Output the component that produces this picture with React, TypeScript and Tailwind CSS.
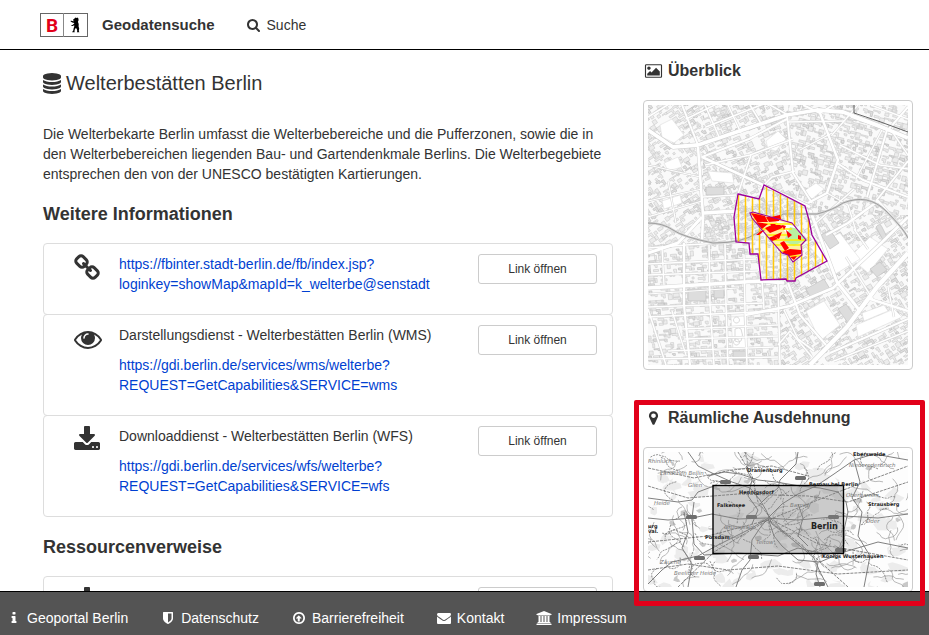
import React from "react";

type IconProps = { name: keyof typeof glyphs; className?: string };

const glyphs = {
  search: {
    box: "64 0 1792 1792",
    d: "M1216 832q0-185-131.500-316.500t-316.500-131.500-316.500 131.500-131.500 316.500 131.500 316.500 316.500 131.500 316.500-131.500 131.500-316.500zm512 832q0 52-38 90t-90 38q-54 0-90-38l-343-342q-179 124-399 124-143 0-273.500-55.500t-225-150-150-225-55.500-273.500 55.500-273.500 150-225 225-150 273.500-55.500 273.500 55.500 225 150 150 225 55.500 273.500q0 220-124 399l343 343q37 37 37 90z",
  },
  database: {
    box: "128 0 1536 1792",
    d: "M896 768q237 0 443-43t325-127v170q0 69-103 128t-280 93.500-385 34.500-385-34.500-280-93.500-103-128v-170q119 84 325 127t443 43zm0 768q237 0 443-43t325-127v170q0 69-103 128t-280 93.500-385 34.500-385-34.500-280-93.500-103-128v-170q119 84 325 127t443 43zm0-384q237 0 443-43t325-127v170q0 69-103 128t-280 93.500-385 34.500-385-34.500-280-93.500-103-128v-170q119 84 325 127t443 43zm0-1152q208 0 385 34.500t280 93.500 103 128v128q0 69-103 128t-280 93.500-385 34.500-385-34.500-280-93.500-103-128v-128q0-69 103-128t280-93.500 385-34.500z",
  },
  link: {
    box: "64 0 1792 1792",
    d: "M1520 1216q0-40-28-68l-208-208q-28-28-68-28-42 0-72 32 3 3 19 18.500t21.500 21.500 15 19 13 25.500 3.500 27.500q0 40-28 68t-68 28q-15 0-27.500-3.500t-25.500-13-19-15-21.500-21.500-18.500-19q-33 31-33 73 0 40 28 68l206 207q27 27 68 27 40 0 68-26l147-146q28-28 28-67zm-703-705q0-40-28-68l-206-207q-28-28-68-28-39 0-68 27l-147 146q-28 28-28 67 0 40 28 68l208 208q27 27 68 27 42 0 72-31-3-3-19-18.500t-21.500-21.500-15-19-13-25.500-3.500-27.500q0-40 28-68t68-28q15 0 27.500 3.500t25.500 13 19 15 21.500 21.500 18.500 19q33-31 33-73zm895 705q0 120-85 203l-147 146q-83 83-203 83-121 0-204-85l-206-207q-83-83-83-203 0-123 88-209l-88-88q-86 88-208 88-120 0-204-84l-208-208q-84-84-84-204t85-203l147-146q83-83 203-83 121 0 204 85l206 207q83 83 83 203 0 123-88 209l88 88q86-88 208-88 120 0 204 84l208 208q84 84 84 204z",
  },
  eye: {
    box: "0 0 1792 1792",
    d: "M1664 960q-152-236-381-353 61 104 61 225 0 185-131.500 316.500t-316.500 131.500-316.500-131.500-131.500-316.500q0-121 61-225-229 117-381 353 133 205 333.500 326.500t434.500 121.500 434.500-121.500 333.500-326.500zm-720-384q0-20-14-34t-34-14q-125 0-214.500 89.500t-89.500 214.500q0 20 14 34t34 14 34-14 14-34q0-86 61-147t147-61q20 0 34-14t14-34zm848 384q0 34-20 69-140 230-376.500 368.500t-499.500 138.500-499.500-139-376.500-368q-20-35-20-69t20-69q140-229 376.500-368t499.500-139 499.500 139 376.500 368q20 35 20 69z",
  },
  download: {
    box: "64 0 1792 1792",
    d: "M1344 1344q0-26-19-45t-45-19-45 19-19 45 19 45 45 19 45-19 19-45zm256 0q0-26-19-45t-45-19-45 19-19 45 19 45 45 19 45-19 19-45zm128-224v320q0 40-28 68t-68 28h-1472q-40 0-68-28t-28-68v-320q0-40 28-68t68-28h465l135 136q58 56 136 56t136-56l136-136h464q40 0 68 28t28 68zm-325-569q17 41-14 70l-448 448q-18 19-45 19t-45-19l-448-448q-31-29-14-70 17-39 59-39h256v-448q0-26 19-45t45-19h256q26 0 45 19t19 45v448h256q42 0 59 39z",
  },
  info: {
    box: "0 0 1792 1792",
    d: "M1216 1344v128q0 26-19 45t-45 19h-512q-26 0-45-19t-19-45v-128q0-26 19-45t45-19h64v-384h-64q-26 0-45-19t-19-45v-128q0-26 19-45t45-19h384q26 0 45 19t19 45v576h64q26 0 45 19t19 45zm-128-1152v192q0 26-19 45t-45 19h-256q-26 0-45-19t-19-45v-192q0-26 19-45t45-19h256q26 0 45 19t19 45z",
  },
  shield: {
    box: "0 0 1792 1792",
    d: "M1344 960v-640h-448v1137q119-63 213-137 235-184 235-360zm192-768v768q0 86-33.500 170.500t-83 150-118 127.500-126.500 103-121 77.500-89.500 49.500-42.500 20q-12 6-26 6t-26-6q-16-7-42.500-20t-89.500-49.500-121-77.500-126.500-103-118-127.500-83-150-33.500-170.500v-768q0-26 19-45t45-19h1152q26 0 45 19t19 45z",
  },
  circleUp: {
    box: "0 0 1792 1792",
    d: "M1216 928q0 14-9 23t-23 9h-192v352q0 13-9.500 22.500t-22.500 9.500h-192q-13 0-22.500-9.500t-9.500-22.500v-352h-192q-13 0-22.500-9.500t-9.500-22.500q0-14 9-23l320-320q9-9 23-9 15 0 24 10l319 319q9 9 9 23zm-320-576q-148 0-273 73t-198 198-73 273 73 273 198 198 273 73 273-73 198-198 73-273-73-273-198-198-273-73zm768 544q0 209-103 385.500t-279.500 279.500-385.500 103-385.500-103-279.500-279.500-103-385.500 103-385.500 279.500-279.500 385.500-103 385.500 103 279.500 279.500 103 385.500z",
  },
  envelope: {
    box: "0 0 1792 1792",
    d: "M1792 710v794q0 66-47 113t-113 47h-1472q-66 0-113-47t-47-113v-794q44 49 101 87 362 246 497 345 57 42 92.500 65.500t94.500 48 110 24.500h2q51 0 110-24.500t94.500-48 92.500-65.500q170-123 498-345 57-39 100-87zm0-294q0 79-49 151t-122 123q-376 261-468 325-10 7-42.500 30.500t-54 38-52 32.500-57.500 27-50 9h-2q-23 0-50-9t-57.500-27-52-32.500-54-38-42.500-30.500q-91-64-262-182.500t-205-142.500q-62-42-117-115.500t-55-136.500q0-78 41.500-130t118.500-52h1472q65 0 112.500 47t47.500 113z",
  },
  university: {
    box: "0 0 1920 1792",
    d: "M960 0l960 384v128h-128q0 26-20.500 45t-48.500 19h-1526q-28 0-48.500-19t-20.500-45h-128v-128zM256 640h256v768h128v-768h256v768h128v-768h256v768h128v-768h256v768h59q28 0 48.500 19t20.500 45v64h-1664v-64q0-26 20.500-45t48.500-19h59v-768zM1851 1600q28 0 48.500 19t20.500 45v128h-1920v-128q0-26 20.500-45t48.500-19h1782z",
  },
  image: {
    box: "0 0 1920 1792",
    d: "M640 576q0 80-56 136t-136 56-136-56-56-136 56-136 136-56 136 56 56 136zm1024 384v448h-1408v-192l320-320 160 160 512-512zm96-704h-1600q-13 0-22.500 9.500t-9.500 22.500v1216q0 13 9.500 22.500t22.500 9.500h1600q13 0 22.500-9.500t9.500-22.500v-1216q0-13-9.500-22.500t-22.500-9.500zm160 32v1216q0 66-47 113t-113 47h-1600q-66 0-113-47t-47-113v-1216q0-66 47-113t113-47h1600q66 0 113 47t47 113z",
  },
  marker: {
    box: "0 0 1792 1792",
    d: "M1152 640q0-106-75-181t-181-75-181 75-75 181 75 181 181 75 181-75 75-181zm256 0q0 109-33 179l-364 774q-16 33-47.500 52t-67.500 19-67.500-19-46.500-52l-365-774q-33-70-33-179 0-212 150-362t362-150 362 150 150 362z",
  },
};

function Icon({ name, className }: IconProps) {
  return (
    <svg viewBox={glyphs[name].box} fill="currentColor" aria-hidden="true" className={className}>
      <path d={glyphs[name].d} />
    </svg>
  );
}

function makeRandom(seed: number) {
  let s = seed;
  return () => {
    s = (s * 1664525 + 1013904223) % 4294967296;
    return s / 4294967296;
  };
}

/* ---------- city map ---------- */

type Zone = { clip: string; angle: number; cx: number; cy: number };

const zones: Zone[] = [
  { clip: "0,0 55,0 55,140 0,140", angle: -33, cx: 28, cy: 70 },
  { clip: "55,0 140,0 150,110 55,140", angle: -24, cx: 100, cy: 60 },
  { clip: "140,0 260,0 260,110 150,110", angle: 14, cx: 200, cy: 50 },
  { clip: "0,138 130,138 130,260 0,260", angle: -4, cx: 60, cy: 200 },
  { clip: "55,110 150,90 150,180 130,180 130,138 55,138", angle: -8, cx: 110, cy: 130 },
  { clip: "130,180 150,110 260,110 260,260 130,260", angle: -31, cx: 200, cy: 190 },
];

function buildBlocks(zone: Zone, seed: number) {
  const rnd = makeRandom(seed);
  let light = "";
  let dark = "";
  for (let x = zone.cx - 130; x < zone.cx + 130; x += 6) {
    for (let y = zone.cy - 130; y < zone.cy + 130; y += 5) {
      const r = rnd();
      const w = 2 + Math.floor(rnd() * 5);
      const h = 2 + Math.floor(rnd() * 4);
      const ox = x + Math.floor(rnd() * 3);
      const oy = y + Math.floor(rnd() * 3);
      if (r < 0.16) continue;
      const shape =
        r < 0.45
          ? `M${ox} ${oy}h${w}v${h}h-${w}z`
          : `M${ox} ${oy}h${w + 1}v${h}h-2v-${Math.max(1, h - 2)}h-${w - 1}z`;
      if (r > 0.86) dark += shape;
      else light += shape;
    }
  }
  return { light, dark };
}

const cityBlocks = zones.map((z, i) => buildBlocks(z, 31 + i * 17));

const streets: [string, number][] = [
  ["M34 0L50 40", 2], ["M57 0L72 34", 1.6], ["M80 0L93 28", 1.6], ["M102 0L114 20", 1.6],
  ["M0 12L26 -4", 1.6], ["M38 14L75 -4", 1.6], ["M58 22L128 -6", 1.6], ["M122 0L140 10", 1.6],
  ["M54 52L101 34L139 14", 2], ["M57 60L102 50L145 34", 1.6], ["M103 50L88 95", 1.6],
  ["M50 42L55 110L54 138", 2.6], ["M0 60L52 72", 1.2], ["M0 96L54 84", 1.2], ["M0 112L54 96", 1.2],
  ["M20 76L28 118", 1.2], ["M55 92L88 90", 1.6], ["M56 108L88 106", 3.6], ["M0 148L30 138L54 112", 3],
  ["M139 10L145 68L164 98", 2], ["M140 17L196 16", 1.6], ["M112 84L124 72L147 66", 1.6],
  ["M172 8L190 55L179 88L160 98", 2.4], ["M155 0L172 8L192 -4", 2], ["M152 45L184 28", 1.4],
  ["M189 58L215 75L260 92", 2], ["M210 0L184 30", 1.4], ["M203 12L239 25", 1.4],
  ["M239 25L219 92", 2], ["M234 25L208 74", 1.4], ["M243 25L260 50", 1.4], ["M260 2L240 25", 2],
  ["M260 56L228 96", 2], ["M192 40L232 60L260 64", 1.4], ["M223 0L260 14", 1.4],
  ["M179 88L200 100L208 126", 1.4], ["M160 125L206 84", 1.6],
  ["M0 143L38 140L108 136", 1.6], ["M0 159L108 154", 1.4], ["M0 170L110 166", 1.4],
  ["M0 183L112 176L136 178", 3.4], ["M0 189L90 183", 1.2], ["M0 202L116 198", 1.6], ["M0 212L130 206", 1.6],
  ["M34 224L130 220", 1.4], ["M36 234L130 231", 1.4], ["M20 246L126 242", 1.4], ["M0 254L130 252", 1.4],
  ["M0 204L18 260", 1.6], ["M14 142L16 180", 1.4], ["M36 138L36 200L42 260", 2.2], ["M61 140L62 200L66 260", 1.6],
  ["M77 138L78 200L80 260", 1.6], ["M96 150L97 206L99 260", 1.6], ["M114 176L116 204", 1.6], ["M130 178L132 260", 1.6],
  ["M24 206L38 250", 1.4],
  ["M97 210L142 201L185 183L229 142L260 112", 2.8], ["M162 260L199 222L229 182L260 148", 4.4],
  ["M140 178L152 210L178 240", 2.2], ["M162 105L189 177L212 206", 3], ["M136 205L150 234L166 246", 1.6],
  ["M130 240L142 226L164 252", 1.6], ["M182 248L260 214", 2], ["M186 256L260 226", 1.6],
  ["M198 152L226 196", 1.4], ["M178 130L200 118L230 96L260 130", 2.4], ["M222 194L260 206", 2.4],
  ["M240 182L246 212", 1.4], ["M206 124L220 144", 1.4],
];

const bufferOutline =
  "90,89 111,94 116,80 157,101 161,115 164,130 179,156 148,173 147,176 139,176 138,174 113,175 110,149 102,149 101,138 88,137 86,112";
const coreOutline =
  "102,108 105,107 144,118 158,135 153,140 154,150 145,157 140,150 134,148 120,132 104,113";
const mainRoad = "M0 25L25 42L50 40L139 10L169 5L195 7L229 20L260 33";
const railway = "M0 118Q15 118 25 125T65 138Q95 138 109 128T135 109H169Q185 105 195 98Q220 88 238 106T260 133";

function CityMap() {
  return (
    <svg viewBox="0 0 260 260" role="img" aria-label="Kartenvorschau" className="block w-full">
      <defs>
        {zones.map((z, i) => (
          <clipPath key={i} id={`zone-${i}`}>
            <polygon points={z.clip} />
          </clipPath>
        ))}
        <clipPath id="buffer">
          <polygon points={bufferOutline} />
        </clipPath>
        <clipPath id="core">
          <polygon points={coreOutline} />
        </clipPath>
        <clipPath id="city">
          <rect width="260" height="260" />
        </clipPath>
      </defs>
      <g clipPath="url(#city)">
        <rect width="260" height="260" fill="#fafafa" />
        {zones.map((z, i) => (
          <g key={i} clipPath={`url(#zone-${i})`}>
            <g transform={`rotate(${z.angle} ${z.cx} ${z.cy})`} strokeWidth="0.6">
              <path d={cityBlocks[i].light} fill="#ececec" stroke="#cbcbcb" />
              <path d={cityBlocks[i].dark} fill="#dfdfdf" stroke="#bcbcbc" />
            </g>
          </g>
        ))}
        <g fill="#ffffff" stroke="#dedede" strokeWidth="0.6">
          <path d="M12 20L24 14L36 30L26 38L14 32z" />
          <path d="M118 36L130 26L138 34L128 46L120 44z" />
          <path d="M60 66L84 68L86 78L64 76z" />
          <path d="M202 152L222 132L240 144L220 168z" />
          <path d="M162 142L192 128L212 154L186 170z" />
          <path d="M158 206L176 196L192 220L172 236z" />
          <path d="M83 212L96 211L98 244L85 245z" />
          <path d="M208 220L246 204L254 212L210 232z" />
          <path d="M214 208L236 200L240 206L216 216z" />
          <path d="M156 86L168 78L176 84L164 94z" />
          <path d="M16 58L30 52L34 62L20 66z" />
          <path d="M14 96L32 90L34 98L16 104z" />
        </g>
        <g fill="none" stroke="#d2d2d2" strokeWidth="0.8">
          <path d="M88 218a3 3 0 1 1 1 0zM88 240a3 3 0 1 1 1 0zM87 224q4-2 6 0q3 6 0 12q-3 2-6 0z" />
        </g>
        <g fill="#dddddd" stroke="#bcbcbc" strokeWidth="0.6">
          <path d="M208 133l7-2 2 2-7 3zM228 122q4-5 6 0l6 12-5 1z" />
          <path d="M158 184l18-10 6 10-18 11z" />
          <path d="M173 130l9-5 9 13-9 6z" />
          <path d="M222 164l10-7 7 8-10 7z" />
          <path d="M190 204l8-5 10 14-8 5z" />
          <path d="M58 82h18v8h-18zM66 183h10v10h-10zM85 246h14v9h-14zM40 184h18v12h-18z" />
        </g>
        <g fill="none" strokeLinejoin="round">
          {streets.map(([d, w], i) => (
            <path key={i} d={d} stroke="#d4d4d4" strokeWidth={w + 1} />
          ))}
          <path d={mainRoad} stroke="#cccccc" strokeWidth="4.800" />
          <path d="M54 52L115 80L162 102" stroke="#cccccc" strokeWidth="3.600" />
          {streets.map(([d, w], i) => (
            <path key={i} d={d} stroke="#ffffff" strokeWidth={w} />
          ))}
          <path d={mainRoad} stroke="#ffffff" strokeWidth="3.800" />
          <path d="M54 52L115 80L162 102" stroke="#ffffff" strokeWidth="2.600" />
          <path d={railway} stroke="#d6d6d6" strokeWidth="2.400" />
          <path d={railway} stroke="#8f8f8f" strokeWidth="0.8" />
          <path d="M206 0V8L230 16L260 27" stroke="#555555" strokeWidth="0.9" />
        </g>
        <g clipPath="url(#buffer)" stroke="#ffc80a" strokeWidth="1.500">
          {[90, 97, 104, 111, 118, 125, 132, 139, 146, 153, 160, 167, 174].map((x) => (
            <path key={x} d={`M${x + 0.5} 78V178`} />
          ))}
        </g>
        <g clipPath="url(#core)">
          <rect x="98" y="104" width="64" height="56" fill="#fff0a0" />
          <path d="M126 114L148 122L140 130z" fill="#ffffff" />
          <path d="M142 122L150 124L157 135L146 141L136 136z" fill="#b9f0a0" />
          <path
            d="M98 109.500H140M98 114H150M98 119H146M110 124H144M112 130H142M120 135H160M124 140H156M128 146H156M132 151H156"
            stroke="#ffee00"
            strokeWidth="1.500"
          />
          <g fill="#ff0000">
            <path d="M103 108L117 111L120 117L109 117zM118 112L132 112L131 116L121 117zM108 117L120 119L114 124z" />
            <path d="M117 123L126 119L137 121L132 124L122 128zM125 131L134 127L131 134zM122 119h6l-3 3z" />
            <path d="M134 120l4 1-2 4zM138 125l6 5-4 3zM132 138l4-2 5 7-4 3zM150 130l3 1 0 4-3-1z" />
            <path d="M120 133l6-2 4 3-6 2zM134 147l8-3 11 1 0 4-12 2zM142 152l7-1-3 4z" />
          </g>
        </g>
        <path d="M108 130l5-4 4-1-6 5zM118 113l14-3 1 4zM134 148l6-1 1 2z" fill="#ff0000" />
        <g fill="none" stroke="#9b009b" strokeWidth="1.300">
          <polygon points={bufferOutline} />
          <polygon strokeWidth="1.100" points={coreOutline} />
        </g>
      </g>
    </svg>
  );
}

/* ---------- regional map ---------- */

function buildTerrain() {
  const rnd = makeRandom(77);
  let woods = "";
  let lakes = "";
  let paths = "";
  let borders = "";
  for (let i = 0; i < 110; i++) {
    const x = rnd() * 260;
    const y = rnd() * 135;
    const size = i % 5 === 0 ? 0.6 : 1.2;
    let d = `M${x.toFixed(1)} ${y.toFixed(1)}`;
    for (let k = 0; k < 6; k++) {
      d += `l${(Math.cos(k * 1.05 + rnd()) * (3 + rnd() * 6) * size).toFixed(1)} ${(Math.sin(k * 1.05 + rnd()) * (2 + rnd() * 4) * size).toFixed(1)}`;
    }
    d += "z";
    if (i % 5 === 0) lakes += d;
    else woods += d;
  }
  for (let i = 0; i < 150; i++) {
    let dir = rnd() * 6.28;
    let d = `M${(rnd() * 260).toFixed(1)} ${(rnd() * 135).toFixed(1)}`;
    for (let k = 0; k < 8; k++) {
      dir += (rnd() - 0.5) * 1.5;
      d += `l${(Math.cos(dir) * 4).toFixed(1)} ${(Math.sin(dir) * 3.5).toFixed(1)}`;
    }
    if (i % 3 === 0) borders += d;
    else paths += d;
  }
  return { woods, lakes, paths, borders };
}

const terrain = buildTerrain();

const towns: [string, number, number][] = [
  ["Oranienburg", 99, 20], ["Eberswalde", 205, 4], ["Bernau bei Berlin", 161, 34],
  ["Hennigsdorf", 91, 42], ["Falkensee", 69, 55], ["Strausberg", 220, 54],
  ["Potsdam", 57, 87], ["Königs Wusterhausen", 174, 106], ["urg", 0, 76], ["val.", 0, 81],
];

const regions: [string, number, number][] = [
  ["Ländchen Bellin", 12, 23], ["Niederoderbruch", 201, 15], ["Oberbarnim", 198, 45],
  ["Barnim", 142, 55], ["Grunewald", 76, 77], ["Teltow", 108, 92], ["Zauche", 12, 112],
  ["Beelitzer Heide", 26, 123], ["Glien", 40, 35], ["Heide", 6, 53], ["Oder", 218, 71], ["Rhinluch", 0, 11],
];

function RegionMap() {
  return (
    <svg viewBox="0 0 260 135" role="img" aria-label="Karte der räumlichen Ausdehnung" className="block w-full">
      <defs>
        <clipPath id="region">
          <rect width="260" height="135" />
        </clipPath>
      </defs>
      <g clipPath="url(#region)">
        <rect width="260" height="135" fill="#fdfdfd" />
        <path d={terrain.woods} fill="#ececec" />
        <path d={terrain.lakes} fill="#c8c8c8" />
        <g fill="none" strokeLinejoin="round">
          <path d={terrain.paths} stroke="#8c8c8c" strokeWidth="0.6" />
          <path d={terrain.borders} stroke="#666666" strokeWidth="0.7" strokeDasharray="2 1" />
          <g stroke="#808080" strokeWidth="1">
            <path d="M40 0L50 14L66 22L84 30L102 36L112 48L118 58L124 72L140 84L152 94L166 106L172 120L180 135" />
            <path d="M150 0L148 12L138 22L132 28L130 36L118 46L112 52" />
            <path d="M260 8L226 2L206 8L186 22L168 34L150 42L134 52L120 66" />
            <path d="M0 46L30 50L44 48L50 40L66 34M46 50L44 66L46 92L56 103L90 101L130 104L150 96L176 102L196 100L230 90L260 96" />
            <path d="M0 66L20 68L44 66L64 62L90 67L118 66L150 68L196 64L230 66L260 62" />
            <path d="M0 132L14 118L24 110L50 104L68 94L88 84L104 76L120 66" />
            <path d="M88 135L94 118L102 108L104 88L112 76L120 66M170 110L168 122L172 135M120 66L126 84L134 94L150 108L172 110" />
            <path d="M60 24L76 20L92 22L110 28L128 30L152 34L172 36L190 40L198 50L200 60L196 78L196 92L186 104L172 110" />
            <path d="M150 52L155 66L150 84L160 94M98 16L104 28L100 44L110 58L104 72" />
            <path d="M36 60L40 80L34 96L44 112L40 135" />
            <path d="M206 8L212 30L204 46L214 60L210 84L222 104L216 135" />
          </g>
          <g stroke="#555555" strokeWidth="0.7" strokeDasharray="3 1">
            <path d="M0 34L40 46L90 42L160 44L200 50L260 30" />
            <path d="M90 0L104 24L110 50L124 68L170 92L260 108" />
            <path d="M0 90L60 84L120 68L190 40L260 14" />
            <path d="M30 135L66 100L120 68M200 135L150 90L120 68" />
            <path d="M0 16L46 26L84 18L124 14L160 24" />
            <path d="M0 118L40 112L80 118L130 114L190 122L260 118" />
          </g>
        </g>
        <g fill="#6e6e6e">
          {[[72, 28], [147, 24], [38, 63], [98, 63], [180, 63], [187, 96], [46, 104], [100, 103], [166, 130]].map(([x, y]) => (
            <rect key={`${x}-${y}`} x={x} y={y} width="11" height="4" rx="1.500" />
          ))}
        </g>
        <g fill="#777777" fontFamily="'DejaVu Sans', sans-serif" fontStyle="italic" fontSize="5.500">
          {regions.map(([t, x, y]) => (
            <text key={t} x={x} y={y}>{t}</text>
          ))}
        </g>
        <rect x="65" y="33.500" width="130.500" height="68" fill="#808080" fillOpacity="0.4" stroke="#000000" strokeWidth="1.400" />
        <g fill="#222222" fontFamily="'DejaVu Sans', sans-serif" fontWeight="bold" fontSize="5">
          {towns.map(([t, x, y]) => (
            <text key={t} x={x} y={y}>{t}</text>
          ))}
          <text x="163" y="77" fontSize="8">Berlin</text>
        </g>
      </g>
    </svg>
  );
}

/* ---------- page ---------- */

type Resource = { icon: "link" | "eye" | "download"; title?: string; url?: [string, string] };

const infos: Resource[] = [
  { icon: "link", url: ["https://fbinter.stadt-berlin.de/fb/index.jsp?", "loginkey=showMap&mapId=k_welterbe@senstadt"] },
  {
    icon: "eye",
    title: "Darstellungsdienst - Welterbestätten Berlin (WMS)",
    url: ["https://gdi.berlin.de/services/wms/welterbe?", "REQUEST=GetCapabilities&SERVICE=wms"],
  },
  {
    icon: "download",
    title: "Downloaddienst - Welterbestätten Berlin (WFS)",
    url: ["https://gdi.berlin.de/services/wfs/welterbe?", "REQUEST=GetCapabilities&SERVICE=wfs"],
  },
];

const references: Resource[] = [{ icon: "download", title: "Welterbestätten Berlin" }];

function ResourceList({ items }: { items: Resource[] }) {
  return (
    <ul>
      {items.map((item, i) => (
        <li key={i} className="-mt-px flex items-start rounded border border-[#dddddd] py-2.5 pr-[15px] pl-[30px] first:mt-0">
          <Icon name={item.icon} className="h-7 w-7 shrink-0" />
          <div className="ml-[17px] min-w-0 flex-1">
            {item.title && <p className="mb-2.5">{item.title}</p>}
            {item.url && (
              <p className="mb-2.5">
                <a href={item.url.join("")} className="text-[#003fd1]">
                  {item.url[0]}
                  <wbr />
                  {item.url[1]}
                </a>
              </p>
            )}
          </div>
          <button type="button" className="ml-4 h-[30px] w-[119px] shrink-0 rounded-[3px] border border-[#cccccc] bg-white text-xs">
            Link öffnen
          </button>
        </li>
      ))}
    </ul>
  );
}

const footerLinks: { icon: keyof typeof glyphs; label: string }[] = [
  { icon: "info", label: "Geoportal Berlin" },
  { icon: "shield", label: "Datenschutz" },
  { icon: "circleUp", label: "Barrierefreiheit" },
  { icon: "envelope", label: "Kontakt" },
  { icon: "university", label: "Impressum" },
];

function Logo() {
  return (
    <svg viewBox="0 -1 48 25" aria-label="Berlin" className="h-[25px] w-12">
      <rect x="0.500" y="0.500" width="47" height="23" fill="#ffffff" stroke="#666666" />
      <path d="M23.500 0V24" stroke="#888888" />
      <text x="6" y="19" fontFamily="Roboto, sans-serif" fontWeight="bold" fontSize="19" fill="#e2001a">B</text>
      <path
        fill="#000000"
        d="M34.500 5.500L35.500 4.600L36.600 5L37.500 4.600L38.400 5.400L38.600 7.200L37.900 8.700L38.700 11L38.600 13.500L39.200 15.600L38.800 18L39.400 19.200H36.900L37.300 18L36.700 15.700L35.700 14.900L34.700 16.700L34.500 18.300L34.700 19.200H32.200L32.600 18.300L33.200 17.800L33.600 15.400L34.300 13.300L34.200 12.200L32.600 13L31.400 12.800L31.300 12L32.500 12L34.200 10.600L34.300 9.900L32.300 9.600L30.600 8.400L30.900 7.600L32 8L33.900 8.300L34.300 7.700L33 7.500L33 6.800z"
      />
    </svg>
  );
}

export default function App() {
  return (
    <div className="h-screen overflow-hidden bg-white font-['Liberation_Sans',Arial,sans-serif] text-sm/5 text-[#333333]">
      <header className="flex h-[50px] items-center border-b border-black pl-10">
        <a href="#start" className="flex items-center gap-3.5">
          <Logo />
          <span className="text-[15px] font-bold">Geodatensuche</span>
        </a>
        <a href="#suche" className="ml-[30px] flex items-center gap-1">
          <Icon name="search" className="h-3.5 w-[18px]" />
          Suche
        </a>
      </header>

      <div className="grid grid-cols-[19fr_9fr] gap-x-[30px] pr-4 pl-[43px]">
        <main className="min-w-0">
          <h1 className="mt-[22px] flex items-center gap-[5px] text-xl/[22px]">
            <Icon name="database" className="h-[21px] w-[18px]" />
            Welterbestätten Berlin
          </h1>
          <p className="mt-[30px]">
            Die Welterbekarte Berlin umfasst die Welterbebereiche und die Pufferzonen, sowie die in den
            Welterbebereichen liegenden Bau- und Gartendenkmale Berlins. Die Welterbegebiete entsprechen den von der
            UNESCO bestätigten Kartierungen.
          </p>
          <h2 className="mt-5 mb-[19px] text-lg/5 font-bold">Weitere Informationen</h2>
          <ResourceList items={infos} />
          <h2 className="mt-5 mb-[19px] text-lg/5 font-bold">Ressourcenverweise</h2>
          <ResourceList items={references} />
        </main>

        <aside className="min-w-0">
          <section className="pt-[11px]">
            <h3 className="mb-[19px] flex items-center gap-1 text-base/5 font-bold">
              <Icon name="image" className="h-4 w-[21px]" />
              Überblick
            </h3>
            <div className="rounded border border-[#cccccc] p-1">
              <CityMap />
            </div>
          </section>
          <section className="relative mt-[38px]">
            <h3 className="mb-[19px] flex items-center gap-1 text-base/5 font-bold">
              <Icon name="marker" className="h-4 w-[21px]" />
              Räumliche Ausdehnung
            </h3>
            <div className="rounded border border-[#cccccc] p-1">
              <RegionMap />
            </div>
            <div className="pointer-events-none absolute -top-2 -right-3 -bottom-3.5 -left-[9px] z-20 rounded-[2px] border-5 border-[#e2001a]" />
          </section>
        </aside>
      </div>

      <footer className="fixed inset-x-0 bottom-0 z-10 flex h-11 items-center gap-[31px] border-t border-black bg-[#545454] px-[5px] pt-2 text-white">
        {footerLinks.map(({ icon, label }) => (
          <a key={label} href={`#${icon}`} className="flex items-center gap-1">
            <Icon name={icon} className="h-3.5 w-[18px]" />
            {label}
          </a>
        ))}
      </footer>
    </div>
  );
}
